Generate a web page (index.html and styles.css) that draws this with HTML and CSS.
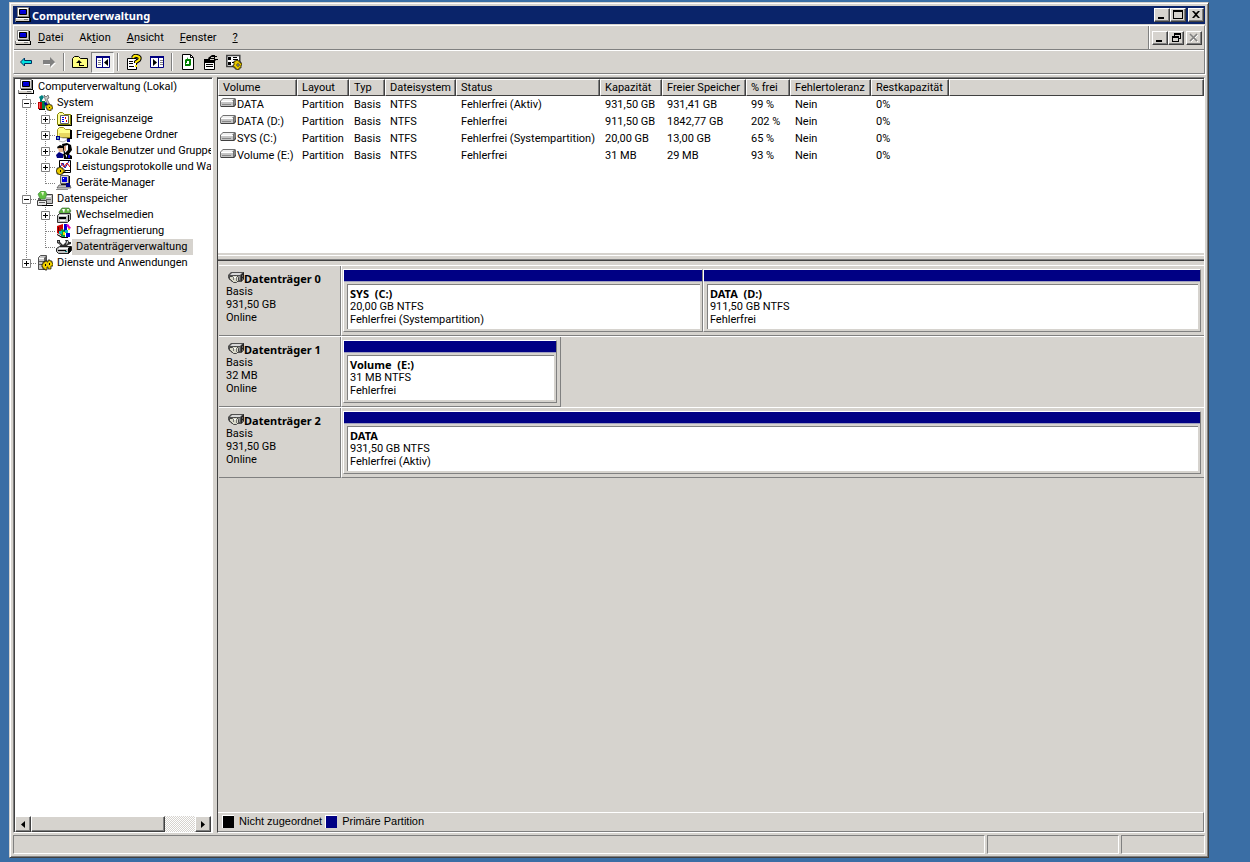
FILE: index.html
```html
<!DOCTYPE html>
<html lang="de">
<head>
<meta charset="utf-8">
<title>Computerverwaltung</title>
<link rel="stylesheet" href="styles.css">
</head>
<body>
<svg class="defs" aria-hidden="true">
  <symbol id="computer" viewBox="0 0 16 16">
    <path fill="#d4d0c8" stroke="#808080" d="M2.500 0.500h11v9h-11z"/><path fill="#000" d="M13 1h1v9H3v1h12V1z"/>
    <path fill="#fff" d="M3 1h10v1H4v7H3z"/><path fill="#0000d0" stroke="#000" d="M4.500 2.500h7v5h-7z"/><path fill="#00f" d="M6 3h4v1H6z"/>
    <path fill="#d4d0c8" d="M1 11h13v3H1z"/><path fill="#fff" d="M1 11h13v1H1z"/><path fill="#000" d="M1 14h14v-3h1v4H1z"/><path fill="#808080" d="M0 11h1v4H0zM9 12h4v1H9z"/>
  </symbol>
  <symbol id="drive" viewBox="0 0 16 10">
    <path fill="#707070" d="M3 0h12l1 1v5l-2 3H1L0 8V3z"/><path fill="#f0f0f0" d="M3 1h11l-2 2H1z"/><path fill="#c4c4c4" d="M1 3h12v5H1z"/><path fill="#fff" d="M1 3h12v1H1z"/><path fill="#888" d="M2 6h9v1H2zM14 3l1-1v4l-1 1z"/><path fill="#404040" d="M1 8h13l2-3v2l-2 2H1z"/>
  </symbol>
  <symbol id="disk" viewBox="0 0 16 12">
    <path fill="#505050" d="M3 0h13v7l-3 3H4L0 6V3z"/><path fill="#d8d8d8" d="M4 1h10l-2 2H2z"/><path fill="#909090" d="M2 4h10v4H4z"/><path fill="#222" d="M13 3l3-3v7l-3 3z"/><path fill="#b0b0b0" d="M14 4l1-1v1l-1 1zM14 7l1-1v1l-1 1z"/><path fill="#d8d8c8" stroke="#444" d="M1.500 4.500h3l1-1h3l2 2v3l-2 2h-3l-3-3h-1z"/><path fill="#777" d="M5 5h1v3H5zM8 5h1v4H8z"/><path fill="#fff" d="M6 5h2v1H6z"/>
  </symbol>
  <symbol id="tools" viewBox="0 0 16 16">
    <path fill="#008080" d="M2 2l3-2 2 2-2 3v3H3V4z"/><path fill="#c8c8c8" stroke="#404040" stroke-width=".6" d="M7 0l2 2 2-2 1 3-2 1 4 8-2 1L8 4z"/><path fill="#c00000" d="M1 7h4v7H1z"/><path fill="#f66" d="M2 8h1v5H2z"/><path fill="#008040" d="M5 6h3v8H5z"/><path fill="#0000a0" d="M7 8l2-1 3 5-2 2z"/><path fill="#e8c800" stroke="#000" stroke-width=".6" d="M9 10h2V9h2v1h2v2h1v2h-2v2h-2v-1h-2v-2H9z"/><path fill="#000" d="M12 12h1v1h-1zM2 14h6v1H2z"/>
  </symbol>
  <symbol id="event" viewBox="0 0 16 16">
    <path fill="#ffff9c" stroke="#808000" d="M1.500 3.500l2-2h3l2 2h6v10h-13z"/><path fill="#fff" stroke="#606060" d="M4.500 4.500h8v8h-8z"/><path fill="#00f" d="M6 6h2v1H6zM6 8h2v1H6zM6 10h2v1H6z"/><path fill="#d00" d="M9 6h1v2H9zM10 9h1v2h-1z"/><path fill="#000" d="M2 14h13V4h1v11H2z"/>
  </symbol>
  <symbol id="shared" viewBox="0 0 16 16">
    <path fill="#ffff8c" stroke="#a09020" d="M1.500 2.500l2-2h4l2 2h5v8h-13z"/><path fill="#e8d860" d="M3 6h11v4H3z"/><path fill="#000" d="M14 3h2v9h-5v-1h3z"/><path fill="#fff" stroke="#808080" stroke-width=".6" d="M3 10l4 1h4v2l-4 2-4-1z"/><path fill="#000090" d="M0 9h4v4H0zM11 12h3v3h-3z"/><path fill="#60a0c0" d="M1 10h2v2H1z"/>
  </symbol>
  <symbol id="users" viewBox="0 0 16 16">
    <path fill="#000" d="M6 1l5-1 4 2 1 5-3 4H8z"/><path fill="#fff" d="M8 3l4-1v5l-3 3z"/><path fill="#d8a080" d="M8 3h2v5H8z"/><path fill="#000" d="M1 4l3-2 3 1v3H2z"/><path fill="#e8b890" d="M2 5h5v4H3z"/><path fill="#000080" d="M0 12l3-3 4 2v4H1z"/><path fill="#000" d="M7 11l4-1 5 3v3H8z"/><path fill="#fff" d="M9 11l2 1v3z"/><path fill="#00c" d="M12 12h2v3h-2z"/>
  </symbol>
  <symbol id="perf" viewBox="0 0 16 16">
    <path fill="#fff" stroke="#000" d="M3.500 1.500h11v12h-11z"/><path stroke="#00a" fill="none" d="M4 8l3-4 2 5 4-7"/><path stroke="#d00" fill="none" d="M5 4l3 4 3-4 3 4"/><path fill="#e8c800" stroke="#000" stroke-width=".7" d="M1 9h2V8h2v1h2v2h2v2H7v2H5v1H3v-1H1v-2H0v-2h1z"/><path fill="#000" d="M4 11h1v2H4zM9 11h5v1H9z"/>
  </symbol>
  <symbol id="device" viewBox="0 0 16 16">
    <path fill="#d4d0c8" stroke="#606060" d="M4.500 .5h8v8h-8z"/><path fill="#0000e0" d="M6 2h5v5H6z"/><path fill="#fff" d="M7 3h1v1H7z"/><path fill="#000" d="M13 1h1v8h-1zM5 9h9v1H5z"/><path fill="#c0c0c0" stroke="#404040" stroke-width=".7" d="M3 10h11l1 3H1z"/><path fill="#000090" d="M10 8h4v4h-4z"/><path fill="#909090" d="M0 14h12v1H0z"/>
  </symbol>
  <symbol id="storage" viewBox="0 0 16 16">
    <path fill="#c0c0c0" stroke="#404040" d="M3.500 5.500l3-2h9v9h-12z"/><path fill="#fff" d="M5 5h9v1H5z"/><path fill="#60c040" stroke="#408040" stroke-width=".6" d="M1 3l3-3h4l2 3-2 5H3z"/><path fill="#e8f8d0" d="M4 1h3l-1 4z"/><path fill="#e8e8e8" stroke="#404040" d="M.5 9.500h9v5h-9z"/><path fill="#606060" d="M2 11h6v1H2zM9 8h5v1H9zM1 7h2v2H1z"/><path fill="#000" d="M5 14h11v1H5z"/>
  </symbol>
  <symbol id="removable" viewBox="0 0 16 16">
    <path fill="#60b040" stroke="#306030" stroke-width=".6" d="M3 5l3-4h7l2 3-3 4H4z"/><path fill="#fff" d="M6 2h3l-1 4zM11 2h2l-1 3z"/><path fill="#c0c0c0" stroke="#303030" d="M1.500 8.500l2-2h11v6l-3 3h-10z"/><path fill="#000" d="M3 10h7v2H3zM12 8h1v6h-1z"/><path fill="#fff" d="M3 8h8v1H3zM4 13h5v1H4z"/>
  </symbol>
  <symbol id="defrag" viewBox="0 0 16 16">
    <path fill="#d00000" d="M1 3l6-2v12l-6-3z"/><path fill="#00a040" d="M5 6l4 1v8l-4-2z"/><path fill="#0000d0" d="M8 1h3v7H8zM10 10h4v4h-4z"/><path fill="#00c0c0" d="M3 8h3v3H3zM9 7h3v3H9z"/><path fill="#f0e000" d="M7 9h2v3H7zM12 5h2v2h-2z"/><path fill="#e000c0" d="M10 2l2-1 3 4-2 1z"/><path fill="#000" d="M1 11l6 3h5v1H6l-5-3z"/><path fill="#600000" d="M2 4h1v5H2z"/>
  </symbol>
  <symbol id="diskmgmt" viewBox="0 0 16 16">
    <path fill="#303030" d="M1 1h3v2l3 3 3-3-1-2h3l1 2h2v2l-3 1-2 2H5L3 5 1 4z"/><path fill="#d0d0d0" d="M2 2h1v2l2 2H4zM11 2h1v2l-2 2z"/><path fill="#c0c0c0" stroke="#202020" d="M.5 9.500l3-2h12v4l-3 3H2.500l-2-2z"/><path fill="#fff" d="M3 9h9v1H3z"/><path fill="#000" d="M2 11h8v1H2zM12 9l3-2v5l-3 3z"/><path fill="#008080" d="M9 12h2v1H9z"/>
  </symbol>
  <symbol id="services" viewBox="0 0 16 16">
    <path fill="#c8c8c8" stroke="#505050" d="M1.500 2.500l2-2h6v12l-2 2h-6z"/><path fill="#fff" d="M2 3h5v1H2z"/><path fill="#606060" d="M2 6h5v1H2zM2 9h5v1H2zM7 3l2-2v12H7z"/><path fill="#f0d000" stroke="#000" stroke-width=".7" d="M6 7h2V6h2v1h1V5h2v1h2v2h1v3h-2v3h-3v-2h-1v3H8v-1H6v-2H5V9h1z"/><path fill="#000" d="M8 9h1v2H8zM12 8h1v2h-1z"/>
  </symbol>
  <symbol id="mid" viewBox="0 0 19 16"><path class="dots" d="M8.500 0v16M9 8.500h10"/></symbol>
  <symbol id="line" viewBox="0 0 19 16"><path class="dots" d="M8.500 0v16"/></symbol>
  <symbol id="end" viewBox="0 0 19 16"><path class="dots" d="M8.500 0v9M9 8.500h10"/></symbol>
  <symbol id="box" viewBox="0 0 19 16"><path fill="#fff" stroke="#808080" d="M4.500 4.500h8v8h-8z"/><path stroke="#000" d="M6 8.500h5"/></symbol>
  <symbol id="minus" viewBox="0 0 19 16"><use href="#mid"/><use href="#box"/></symbol>
  <symbol id="plus" viewBox="0 0 19 16"><use href="#mid"/><use href="#box"/><path stroke="#000" d="M8.500 6v5"/></symbol>
  <symbol id="plusend" viewBox="0 0 19 16"><use href="#end"/><use href="#box"/><path stroke="#000" d="M8.500 6v5"/></symbol>
</svg>

<main class="window">
  <header class="titlebar">
    <svg class="icon"><use href="#computer"/></svg>
    <h1>Computerverwaltung</h1>
    <button class="cap" aria-label="Minimieren"><svg viewBox="0 0 12 10"><path d="M2 7h6v2H2z"/></svg></button>
    <button class="cap" aria-label="Maximieren"><svg viewBox="0 0 12 10"><path fill-rule="evenodd" d="M1 0h10v9H1zM2 2v6h8V2z"/></svg></button>
    <button class="cap apart" aria-label="Schließen"><svg viewBox="0 0 12 10"><path d="M2 1h2l2 2 2-2h2L7 4.500 10 8H8L6 6 4 8H2l3-3.500z"/></svg></button>
  </header>

  <div class="rebar">
    <div class="menurow">
      <svg class="icon"><use href="#computer"/></svg>
      <nav class="menu">
        <button><u>D</u>atei</button><button>Ak<u>t</u>ion</button><button><u>A</u>nsicht</button><button><u>F</u>enster</button><button><u>?</u></button>
      </nav>
      <div class="mdi">
        <button class="cap" aria-label="Fenster minimieren"><svg viewBox="0 0 12 10"><path d="M2 7h6v2H2z"/></svg></button>
        <button class="cap" aria-label="Fenster wiederherstellen"><svg viewBox="0 0 12 10"><path fill-rule="evenodd" d="M4 0h7v6H9v3H2V3h2zM5 2v1h4v2h1V2zM3 5v3h5V5z"/></svg></button>
        <button class="cap apart" disabled aria-label="Fenster schließen"><svg viewBox="0 0 12 10"><path fill="none" stroke="#fff" d="M3 2l7 7M10 2L3 9"/><path fill="none" stroke="#808080" stroke-width="1.500" d="M2 1l7 7M9 1L2 8"/></svg></button>
      </div>
    </div>
    <div class="toolbar">
      <button aria-label="Zurück"><svg viewBox="0 0 16 16"><path fill="#00e0e0" stroke="#003060" d="M2.500 8l4-4v2.500h7v3h-7V12z"/></svg></button>
      <button aria-label="Vorwärts"><svg viewBox="0 0 16 16"><path fill="#fff" d="M15 9l-5 5v-3H3V9z"/><path fill="#808080" d="M14 8L9 3v3H2v4h7v3z"/></svg></button>
      <i></i>
      <button aria-label="Aufwärts"><svg viewBox="0 0 16 16"><path fill="#ffff80" stroke="#000" d="M.5 4.500l2-2h4l2 2h7v9H.5z"/><path d="M7 6l3 3H8v2h4v1H7V9H4z"/></svg></button>
      <button class="on" aria-label="Konsolenstruktur"><svg viewBox="0 0 16 16"><path fill="#fff" stroke="#000080" d="M1.500 2.500h13v11h-13z"/><path fill="#000080" d="M1 2h14v2H1zM7 3h1v11H7z"/><path fill="#808080" d="M3 6h3v1H3zM3 8h3v1H3zM3 10h3v1H3z"/><path d="M13 5v7L9 8.500z"/></svg></button>
      <i></i>
      <button aria-label="Hilfe"><svg viewBox="0 0 16 16"><path fill="#fff" stroke="#000" d="M1.500 4.500h9v11h-9z"/><path d="M3 7h4v1H3zM3 9h4v1H3zM3 12h5v1H3z"/><path fill="none" stroke="#000" stroke-width="4" d="M7 4q1-3 4-2 4 1 2 4l-3 2v1"/><path fill="none" stroke="#ffe800" stroke-width="2" d="M7 4q1-3 4-2 4 1 2 4l-3 2v1M10 11v2"/></svg></button>
      <button aria-label="Aktionsbereich"><svg viewBox="0 0 16 16"><path fill="#fff" stroke="#000080" d="M1.500 2.500h13v11h-13z"/><path fill="#000080" d="M1 2h14v2H1zM9 3h1v11H9z"/><path fill="#808080" d="M11 6h3v1h-3zM11 8h3v1h-3zM11 10h3v1h-3z"/><path d="M4 5v7l4-3.500z"/></svg></button>
      <i></i>
      <button aria-label="Aktualisieren"><svg viewBox="0 0 16 16"><path fill="#fff" stroke="#000" d="M2.500.5h8l3 3v12h-11z"/><path fill="none" stroke="#000" d="M10.500 1v2.500H13"/><path fill="#008000" d="M8 3v2h3v3H9V7H7v2H5V6l1-1h1zM8 14v-2H5V9h1v1h3V8h2v3l-1 1H8z"/></svg></button>
      <button aria-label="Eigenschaften"><svg viewBox="0 0 16 16"><path fill="#fff" stroke="#000" d="M1.500 6.500h10v9h-10z"/><path d="M1 5h10v4H1zM3 10h7v1H3zM3 12h7v1H3zM5 4l4-3h6v5h-2l-3 3-2-1-2-2z"/><path fill="#d4d0c8" d="M8 3h3v1H8zM7 5h4v1H7zM12 1h4v4h-4z"/><path d="M12 2h2v1h-2z"/></svg></button>
      <button aria-label="Einstellungen"><svg viewBox="0 0 16 16"><path fill="#fff" stroke="#404040" stroke-width="1.500" d="M.8 1.500h13v11H.8z"/><path d="M2 3h3v3H2zM7 3h4v1H7zM7 5h5v1H7zM2 8h3v3H2zM6 8h2v1H6z"/><path fill="#e8c800" stroke="#000" stroke-width=".7" d="M8 7h2V6h2v1h2v2h2v2h-1v3h-2v2h-2v-1H9v-2H7v-2h1z"/><path fill="#fff" stroke="#000" stroke-width=".7" d="M11 10h2v2h-2z"/></svg></button>
    </div>
  </div>

  <div class="panes">
    <aside class="treepane">
      <ul class="tree">
        <li><svg class="icon"><use href="#computer"/></svg><span>Computerverwaltung (Lokal)</span></li>
        <li><svg class="g"><use href="#minus"/></svg><svg class="icon"><use href="#tools"/></svg><span>System</span></li>
        <li><svg class="g"><use href="#line"/></svg><svg class="g"><use href="#plus"/></svg><svg class="icon"><use href="#event"/></svg><span>Ereignisanzeige</span></li>
        <li><svg class="g"><use href="#line"/></svg><svg class="g"><use href="#plus"/></svg><svg class="icon"><use href="#shared"/></svg><span>Freigegebene Ordner</span></li>
        <li><svg class="g"><use href="#line"/></svg><svg class="g"><use href="#plus"/></svg><svg class="icon"><use href="#users"/></svg><span>Lokale Benutzer und Gruppe</span></li>
        <li><svg class="g"><use href="#line"/></svg><svg class="g"><use href="#plus"/></svg><svg class="icon"><use href="#perf"/></svg><span>Leistungsprotokolle und War</span></li>
        <li><svg class="g"><use href="#line"/></svg><svg class="g"><use href="#end"/></svg><svg class="icon"><use href="#device"/></svg><span>Geräte-Manager</span></li>
        <li><svg class="g"><use href="#minus"/></svg><svg class="icon"><use href="#storage"/></svg><span>Datenspeicher</span></li>
        <li><svg class="g"><use href="#line"/></svg><svg class="g"><use href="#plus"/></svg><svg class="icon"><use href="#removable"/></svg><span>Wechselmedien</span></li>
        <li><svg class="g"><use href="#line"/></svg><svg class="g"><use href="#mid"/></svg><svg class="icon"><use href="#defrag"/></svg><span>Defragmentierung</span></li>
        <li><svg class="g"><use href="#line"/></svg><svg class="g"><use href="#end"/></svg><svg class="icon"><use href="#diskmgmt"/></svg><span class="selected">Datenträgerverwaltung</span></li>
        <li><svg class="g"><use href="#plusend"/></svg><svg class="icon"><use href="#services"/></svg><span>Dienste und Anwendungen</span></li>
      </ul>
      <div class="scroll">
        <button class="raised arrow" aria-label="Nach links"><svg viewBox="0 0 4 7"><path d="M4 0v7L0 3.500z"/></svg></button>
        <div class="raised thumb"></div>
        <div class="track"></div>
        <button class="raised arrow" aria-label="Nach rechts"><svg viewBox="0 0 4 7"><path d="M0 0v7l4-3.500z"/></svg></button>
      </div>
    </aside>

    <section class="detail">
      <div class="volumes">
        <table>
          <colgroup><col class="c-vol"><col class="c-lay"><col class="c-typ"><col class="c-fs"><col class="c-stat"><col class="c-cap"><col class="c-free"><col class="c-pct"><col class="c-tol"><col class="c-rest"><col></colgroup>
          <thead><tr><th>Volume</th><th>Layout</th><th>Typ</th><th>Dateisystem</th><th>Status</th><th>Kapazität</th><th>Freier Speicher</th><th>% frei</th><th>Fehlertoleranz</th><th>Restkapazität</th><th></th></tr></thead>
          <tbody>
            <tr><td><svg class="drive"><use href="#drive"/></svg>DATA</td><td>Partition</td><td>Basis</td><td>NTFS</td><td>Fehlerfrei (Aktiv)</td><td>931,50 GB</td><td>931,41 GB</td><td>99 %</td><td>Nein</td><td>0%</td><td></td></tr>
            <tr><td><svg class="drive"><use href="#drive"/></svg>DATA (D:)</td><td>Partition</td><td>Basis</td><td>NTFS</td><td>Fehlerfrei</td><td>911,50 GB</td><td>1842,77 GB</td><td>202 %</td><td>Nein</td><td>0%</td><td></td></tr>
            <tr><td><svg class="drive"><use href="#drive"/></svg>SYS (C:)</td><td>Partition</td><td>Basis</td><td>NTFS</td><td>Fehlerfrei (Systempartition)</td><td>20,00 GB</td><td>13,00 GB</td><td>65 %</td><td>Nein</td><td>0%</td><td></td></tr>
            <tr><td><svg class="drive"><use href="#drive"/></svg>Volume (E:)</td><td>Partition</td><td>Basis</td><td>NTFS</td><td>Fehlerfrei</td><td>31 MB</td><td>29 MB</td><td>93 %</td><td>Nein</td><td>0%</td><td></td></tr>
          </tbody>
        </table>
      </div>
      <div class="splitter"></div>
      <div class="disks">
        <article class="disk">
          <div class="label"><h2><svg class="diskicon"><use href="#disk"/></svg>Datenträger 0</h2><p>Basis</p><p>931,50 GB</p><p>Online</p></div>
          <div class="parts">
            <div class="part sys"><div class="bar"></div><div class="info"><h3>SYS&nbsp; (C:)</h3><p>20,00 GB NTFS</p><p>Fehlerfrei (Systempartition)</p></div></div>
            <div class="part data"><div class="bar"></div><div class="info"><h3>DATA&nbsp; (D:)</h3><p>911,50 GB NTFS</p><p>Fehlerfrei</p></div></div>
          </div>
        </article>
        <article class="disk">
          <div class="label"><h2><svg class="diskicon"><use href="#disk"/></svg>Datenträger 1</h2><p>Basis</p><p>32 MB</p><p>Online</p></div>
          <div class="parts small">
            <div class="part"><div class="bar"></div><div class="info"><h3>Volume&nbsp; (E:)</h3><p>31 MB NTFS</p><p>Fehlerfrei</p></div></div>
          </div>
        </article>
        <article class="disk">
          <div class="label"><h2><svg class="diskicon"><use href="#disk"/></svg>Datenträger 2</h2><p>Basis</p><p>931,50 GB</p><p>Online</p></div>
          <div class="parts">
            <div class="part"><div class="bar"></div><div class="info"><h3>DATA</h3><p>931,50 GB NTFS</p><p>Fehlerfrei (Aktiv)</p></div></div>
          </div>
        </article>
      </div>
      <div class="legend"><span class="swatch free"></span>Nicht zugeordnet<span class="swatch primary"></span>Primäre Partition</div>
    </section>
  </div>

  <footer class="status"><div></div><div></div><div></div></footer>
</main>
</body>
</html>
```
FILE: styles.css
```css
:root {
  --face: #d6d3ce;
  --shadow: #808080;
  --dark: #404040;
  --navy: #000084;
}

* { box-sizing: border-box; }

body {
  margin: 0;
  height: 100vh;
  padding: 2px 41px 4px 9px;
  background: #3a6ea5;
  color: #000;
  font: 11px/13px Roboto, sans-serif;
  overflow: hidden;
}

h1, h2, h3, p, ul { margin: 0; padding: 0; font-size: 11px; }
h1, h2, h3 { font-family: "Noto Sans", sans-serif; }
button { font: inherit; color: inherit; border: 0; padding: 0; background: none; }
svg { flex: none; display: block; }
.defs { position: absolute; width: 0; height: 0; }
.icon { width: 16px; height: 16px; }
.dots { fill: none; stroke: #808080; stroke-dasharray: 1 1; }

.window {
  height: 100%;
  display: flex;
  flex-direction: column;
  padding: 3px;
  background: var(--face);
  border: 1px solid var(--face);
  border-right-color: var(--dark);
  border-bottom-color: var(--dark);
  box-shadow: inset 1px 1px #fff, inset -1px -1px var(--shadow);
}

.titlebar {
  display: flex;
  align-items: center;
  height: 18px;
  padding: 0 1px 0 2px;
  background: #0a246a;
  color: #fff;
}
.titlebar h1 { flex: 1; padding-left: 1px; }

.cap {
  display: grid;
  place-items: center;
  width: 16px;
  height: 14px;
  background: var(--face);
  border: 1px solid #fff;
  border-right-color: var(--dark);
  border-bottom-color: var(--dark);
  box-shadow: inset -1px -1px var(--shadow);
}
.cap svg { width: 12px; height: 10px; }
.apart { margin-left: 2px; }

.rebar {
  margin-top: 1px;
  border: 1px solid var(--shadow);
  border-top-color: #fff;
  border-left-color: #fff;
  box-shadow: 1px 1px #fff;
}
.menurow {
  display: flex;
  align-items: center;
  height: 24px;
  padding-left: 1px;
  border-bottom: 1px solid var(--shadow);
}
.menu { flex: 1; display: flex; }
.menu button { padding: 0 8px; }
.menu button:first-child { padding-left: 7px; }
.mdi {
  align-self: stretch;
  display: flex;
  align-items: center;
  padding: 0 2px;
  border-left: 1px solid #fff;
  box-shadow: -1px 0 var(--shadow);
}
.toolbar {
  display: flex;
  align-items: center;
  height: 23px;
  border-top: 1px solid #fff;
}
.toolbar button {
  display: grid;
  place-items: center;
  width: 23px;
  height: 21px;
}
.toolbar button svg { width: 16px; height: 16px; }
.toolbar i {
  width: 2px;
  height: 18px;
  margin: 0 3px;
  background: var(--shadow);
  border-right: 1px solid #fff;
}
.toolbar .on {
  background: #ecebe8;
  border: 1px solid var(--shadow);
  border-right-color: #fff;
  border-bottom-color: #fff;
}

.panes {
  flex: 1;
  min-height: 0;
  display: flex;
  gap: 4px;
  margin-top: 3px;
}
.treepane, .detail {
  display: flex;
  flex-direction: column;
  border: 1px solid var(--shadow);
  border-right-color: #fff;
  border-bottom-color: #fff;
}
.treepane {
  flex: none;
  width: 200px;
  background: #fff;
  box-shadow: inset 1px 1px var(--dark);
  padding: 1px 1px 0 1px;
}
.tree {
  flex: 1;
  overflow: hidden;
  list-style: none;
  padding-left: 3px;
}
.tree li { display: flex; height: 16px; white-space: nowrap; }
.tree span { padding: 1px 0 2px 4px; }
.tree .selected { background: var(--face); padding-right: 6px; }
.g { width: 19px; height: 16px; }

.scroll { display: flex; height: 16px; }
.raised {
  background: var(--face);
  border: 1px solid #fff;
  border-right-color: var(--dark);
  border-bottom-color: var(--dark);
  box-shadow: inset -1px -1px var(--shadow);
}
.arrow { display: grid; place-items: center; width: 16px; }
.arrow svg { width: 4px; height: 7px; }
.thumb { flex: 134; }
.track { flex: 30; background: repeating-conic-gradient(#fff 0 25%, var(--face) 0 50%) 0 0 / 2px 2px; }

.detail {
  flex: 1;
  min-width: 0;
  border-left-color: var(--dark);
}
.volumes {
  height: 177px;
  background: #fff;
  border-top: 1px solid var(--dark);
  border-bottom: 2px solid var(--face);
}
table { width: 100%; table-layout: fixed; border-collapse: separate; border-spacing: 0; }
th, td { padding: 0 0 0 5px; text-align: left; font-weight: normal; white-space: nowrap; }
th {
  height: 17px;
  background: var(--face);
  border: 1px solid #fff;
  border-right-color: var(--dark);
  border-bottom-color: var(--dark);
  padding-left: 4px;
  box-shadow: inset -1px 0 var(--shadow);
}
td { height: 17px; }
td:first-child { padding-left: 2px; }
.drive { display: inline-block; width: 16px; height: 10px; margin-right: 1px; vertical-align: 0; }
.c-vol { width: 79px; }
.c-lay { width: 52px; }
.c-typ { width: 36px; }
.c-fs { width: 71px; }
.c-stat { width: 144px; }
.c-cap { width: 62px; }
.c-free { width: 84px; }
.c-pct { width: 44px; }
.c-tol { width: 81px; }
.c-rest { width: 78px; }

.splitter {
  height: 6px;
  border-top: 1px solid #fff;
  border-bottom: 1px solid var(--dark);
  box-shadow: inset 0 -1px var(--shadow);
}
.disks { flex: 1; padding: 4px 0 0 1px; }
.disk { display: flex; height: 71px; border-top: 1px solid #fff; }
.label {
  width: 122px;
  padding: 6px 0 0 7px;
  border-right: 1px solid var(--shadow);
  border-bottom: 1px solid var(--shadow);
}
h2 { display: flex; }
.diskicon { width: 16px; height: 12px; margin-left: 2px; }
.parts {
  flex: 1;
  display: flex;
  padding: 3px 3px 3px 1px;
  border-left: 1px solid #fff;
  border-bottom: 1px solid var(--shadow);
}
.parts.small { flex: none; width: 220px; border-right: 1px solid var(--shadow); }
.part {
  flex: 1;
  border: 1px solid #fff;
  border-right-color: var(--shadow);
  border-bottom-color: var(--shadow);
}
.part.sys { flex: 360; }
.part.data { flex: 499; }
.bar { height: 12px; background: var(--navy); border-bottom: 1px solid #a0a0c0; }
.info {
  height: 45px;
  margin: 2px 2px 0 3px;
  padding: 2px 0 0 2px;
  background: #fff;
  border: solid var(--shadow);
  border-width: 1px 0 0 1px;
}

.legend {
  display: flex;
  align-items: center;
  height: 20px;
  padding: 0 0 1px 4px;
  border-top: 1px solid #fff;
  border-right: 1px solid var(--shadow);
  border-bottom: 1px solid var(--shadow);
  font-family: "Liberation Sans", sans-serif;
}
.swatch { width: 12px; height: 13px; margin-right: 5px; border: 1px solid #fff; border-width: 1px 0 0 1px; }
.free { background: #000; }
.primary { background: var(--navy); margin-left: 3px; }

.status { display: flex; gap: 2px; height: 19px; margin-top: 2px; }
.status div { border: 1px solid var(--shadow); border-right-color: #fff; border-bottom-color: #fff; }
.status div:nth-child(1) { flex: 1; }
.status div:nth-child(2) { width: 132px; }
.status div:nth-child(3) { width: 84px; }
```
